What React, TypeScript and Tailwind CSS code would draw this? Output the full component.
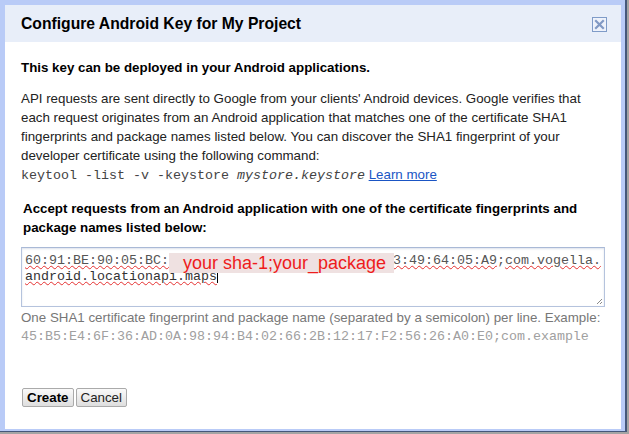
const mono = "font-['Liberation_Mono','Courier_New',monospace]"
const squiggle = 'underline decoration-wavy decoration-1 decoration-[#e53030] underline-offset-[1px]'

function CloseBox() {
  return (
    <div className="w-[15px] h-[15px] mt-[2px] border border-[#7f9bc8] bg-[#eef2fb] flex items-center justify-center">
      <svg width="11" height="11" viewBox="0 0 11 11">
        <path d="M2 2 L9 9 M9 2 L2 9" stroke="#8199c4" strokeWidth="2.2" strokeLinecap="square" />
      </svg>
    </div>
  )
}

function Grip() {
  return (
    <svg className="absolute right-[1px] bottom-[1px]" width="8" height="8" viewBox="0 0 8 8">
      <path d="M7 2 L2 7 M7 5 L5 7" stroke="#8a8a8a" strokeWidth="1" />
    </svg>
  )
}

export default function App() {
  return (
    <div className="w-[629px] h-[434px] bg-[#a4a4a4] overflow-hidden font-['Liberation_Sans',Arial,sans-serif] text-[13.33px] leading-[19px] text-[#111]">
      <div className="w-[627px] h-[432px] border-r-2 border-b border-[#45577a]">
        <div className="h-full flex flex-col bg-white border-t-[5px] border-l-[5px] border-r-4 border-b-2 border-[#b9cbf7]">
          {/* title bar */}
          <div className="h-[37px] shrink-0 bg-[#e8eef9] flex items-center justify-between pl-[16px] pr-[14px]">
            <h1 className="text-[15.7px] font-bold text-black">Configure Android Key for My Project</h1>
            <CloseBox />
          </div>

          {/* body */}
          <div className="flex-1 flex flex-col pl-[16px] pr-[16px] pt-[16px] pb-[22px]">
            <p className="font-bold text-black">This key can be deployed in your Android applications.</p>
            <p className="mt-[12px] text-[#222]">
              API requests are sent directly to Google from your clients' Android devices. Google verifies that
              each request originates from an Android application that matches one of the certificate SHA1
              fingerprints and package names listed below. You can discover the SHA1 fingerprint of your
              developer certificate using the following command:
              <br />
              <span className={`${mono} text-[#444]`}>
                keytool -list -v -keystore <i>mystore.keystore</i>
              </span>{' '}
              <a className="text-[#1a55c4] underline">Learn more</a>
            </p>

            <p className="mt-[14px] pl-[2px] font-bold text-black">
              Accept requests from an Android application with one of the certificate fingerprints and package
              names listed below:
            </p>

            <div className="relative mt-[10px] w-[584px] h-[60px] border border-[#b5c3dd] border-t-[#a9b9d6] shadow-[inset_0_1px_2px_rgba(120,140,180,0.25)] pl-[3px] pt-[5px]">
              <div className={`${mono} leading-[16px] text-[#555] whitespace-pre`}>
                <span className={squiggle}>60:91:BE:90:05:BC:</span>
                {'                            '}
                <span className={squiggle}>3:49:64:05:A9</span>;<span className={squiggle}>com.vogella.</span>
                {'\n'}
                <span className={`${squiggle} text-[#333]`}>android.locationapi.maps</span>
                <span className="inline-block w-[1px] h-[14px] bg-black align-[-3px]" />
              </div>
              {/* redaction patch */}
              <div className="absolute left-[147px] top-[5px] w-[225px] h-[20px] bg-[#efe1e1] pl-[14px] text-[18px] leading-[20px] text-[#ee1c1c]">
                your sha-1;your_package
              </div>
              <Grip />
            </div>

            <p className="mt-[1px] text-[#777]">
              One SHA1 certificate fingerprint and package name (separated by a semicolon) per line. Example:
            </p>
            <p className={`${mono} text-[#a0a0a0]`}>
              45:B5:E4:6F:36:AD:0A:98:94:B4:02:66:2B:12:17:F2:56:26:A0:E0;com.example
            </p>

            <div className="mt-auto flex gap-[2px] pl-[1px]">
              <button className="h-[19px] px-[4px] border border-[#aaa] rounded-[2px] bg-gradient-to-b from-[#fafafa] to-[#dedede] font-bold text-black leading-[17px]">
                Create
              </button>
              <button className="h-[19px] px-[4px] border border-[#aaa] rounded-[2px] bg-gradient-to-b from-[#fafafa] to-[#dedede] text-[#222] leading-[17px]">
                Cancel
              </button>
            </div>
          </div>
        </div>
      </div>
    </div>
  )
}
